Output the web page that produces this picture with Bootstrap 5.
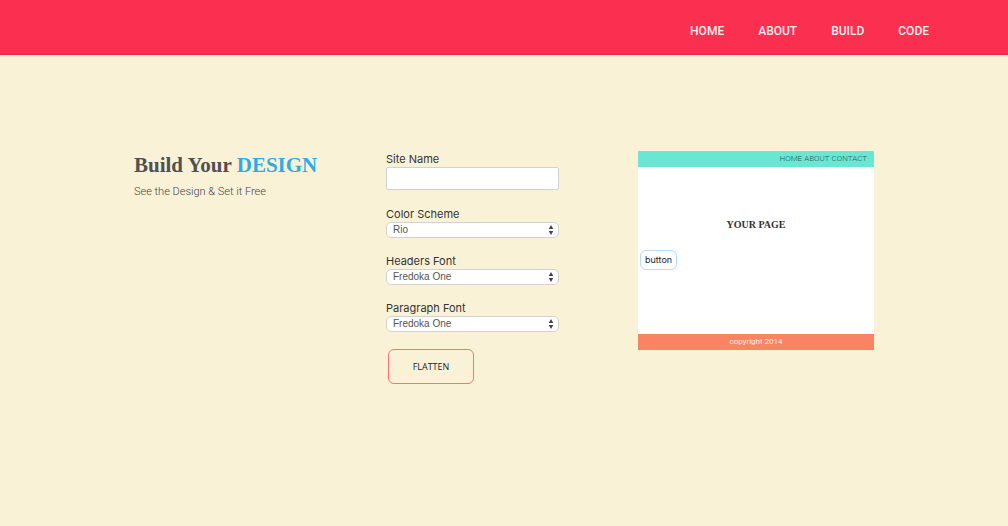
<!DOCTYPE html>
<html lang="en">
<head>
<meta charset="utf-8">
<meta name="viewport" content="width=device-width, initial-scale=1">
<title>Build Your Design</title>
<link href="https://cdn.jsdelivr.net/npm/bootstrap@5.3.0/dist/css/bootstrap.min.css" rel="stylesheet">
<style>
  body { background: #faf2d7; font-family: Roboto, sans-serif; font-size: 11px; line-height: 16px; color: #333; }
  .topbar { background: #fb2f50; border-bottom: 1px solid #f4274b; padding: 23px 79px 14px 0; }
  .topbar .nav { gap: 34px; }
  .topbar .nav-link { padding: 0; color: #ffeef0; font-size: 12px; line-height: 17px; font-weight: 500; }
  .builder { width: 75%; margin: 96px auto 0; }
  .title { font: bold 21px/28px "Liberation Serif", serif; color: #505055; margin-bottom: 5px; }
  .title span { color: #2cace6; }
  .tagline { font: 300 11px/16px Roboto, sans-serif; color: #444; }
  .fields { padding-right: 63px; }
  .field-label { display: block; font: 11px/16px Inter, sans-serif; color: #333; }
  .form-control.site { height: 23px; padding: 2px 6px; border: 1px solid #d2d2d2; border-radius: 2px; font-size: 11px; margin-bottom: 16px; }
  .form-select.pick {
    font: 10px/14px "Liberation Sans", sans-serif; color: #555; height: 16px; padding: 0 16px 0 6px;
    border: 1px solid #d2d2d2; border-radius: 5px; margin-bottom: 15px;
    background: #fff url("data:image/svg+xml,%3Csvg xmlns='http://www.w3.org/2000/svg' viewBox='0 0 6 10'%3E%3Cpath fill='%23444' d='M3 0 5.300 4H.7zM3 10 .7 6h4.600z'/%3E%3C/svg%3E") no-repeat right 4px center / 6px 10px;
  }
  .flatten { width: 86px; height: 35px; margin: 2px 0 0 2px; padding: 0; border: 1px solid #fa7474; border-radius: 6px; font: 9px/16px "Open Sans", sans-serif; color: #222; }
  .preview { background: #fff; }
  .preview-nav { background: #68e8d3; padding: 0 7px; gap: 2px; font: 300 8px/16px Roboto, sans-serif; }
  .preview-nav a { color: #2f5a54; text-decoration: none; }
  .preview-body { height: 167px; padding: 50px 2px 0; }
  .preview-title { font: bold 10px/16px "Liberation Serif", serif; color: #333; margin-bottom: 17px; }
  .preview-btn { padding: 0 4px; border: 1px solid #b4dcf8; border-radius: 6px; font: 9px/18px Inter, sans-serif; color: #222; }
  .preview-foot { background: #f98464; color: #fff0ea; font: 8px/16px Roboto, sans-serif; }
</style>
</head>
<body>
<header class="topbar">
  <nav class="nav justify-content-end" aria-label="Main">
    <a class="nav-link" href="#home">HOME</a>
    <a class="nav-link" href="#about">ABOUT</a>
    <a class="nav-link" href="#build">BUILD</a>
    <a class="nav-link" href="#code">CODE</a>
  </nav>
</header>
<main class="builder">
  <div class="row gx-3 mx-0">
    <section class="col-4">
      <h1 class="title text-nowrap">Build Your <span>DESIGN</span></h1>
      <p class="tagline">See the Design &amp; Set it Free</p>
    </section>
    <form class="col-4">
      <div class="fields">
        <label class="field-label" for="site">Site Name</label>
        <input class="form-control site" id="site" type="text">
        <label class="field-label" for="scheme">Color Scheme</label>
        <select class="form-select pick" id="scheme"><option>Rio</option></select>
        <label class="field-label" for="headers">Headers Font</label>
        <select class="form-select pick" id="headers"><option>Fredoka One</option></select>
        <label class="field-label" for="paragraph">Paragraph Font</label>
        <select class="form-select pick" id="paragraph"><option>Fredoka One</option></select>
        <button class="btn flatten" type="button">FLATTEN</button>
      </div>
    </form>
    <section class="col-4">
      <div class="preview">
        <nav class="preview-nav d-flex justify-content-end" aria-label="Preview">
          <a href="#p-home">HOME</a><a href="#p-about">ABOUT</a><a href="#p-contact">CONTACT</a>
        </nav>
        <div class="preview-body">
          <h2 class="preview-title text-center">YOUR PAGE</h2>
          <button class="btn preview-btn" type="button">button</button>
        </div>
        <footer class="preview-foot text-center">copyright 2014</footer>
      </div>
    </section>
  </div>
</main>
<script src="https://cdn.jsdelivr.net/npm/bootstrap@5.3.0/dist/js/bootstrap.bundle.min.js"></script>
</body>
</html>
